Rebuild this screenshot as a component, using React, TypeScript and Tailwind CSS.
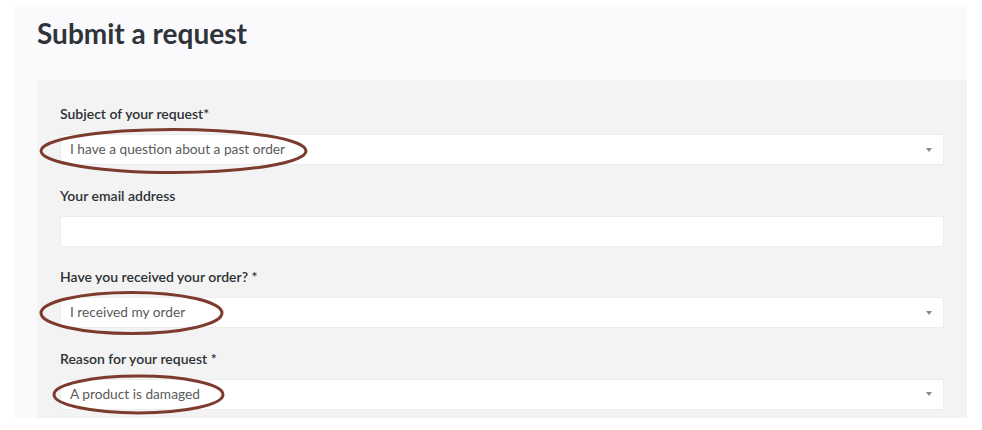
import React from "react";

const fields = [
  { label: "Subject of your request*", value: "I have a question about a past order", select: true },
  { label: "Your email address", value: "", select: false },
  { label: "Have you received your order? *", value: "I received my order", select: true },
  { label: "Reason for your request *", value: "A product is damaged", select: true },
];

function Caret() {
  return (
    <svg width="6" height="4" viewBox="0 0 6 4" className="shrink-0">
      <path d="M0 0 L6 0 L3 4 Z" fill="#8a8a8a" />
    </svg>
  );
}

export default function App() {
  return (
    <div className="relative h-[430px] w-[982px] bg-white pt-[7px] pl-[15px] pr-[15px] font-['Lato','Noto_Sans',sans-serif] overflow-hidden">
      <div className="bg-[#fafafc] pl-[22px]">
        <h1 className="h-[73px] pt-[8px] text-[28px] font-bold leading-[36px] text-[#2f343b]">
          Submit a request
        </h1>
        <div className="bg-[#f3f3f3] pl-[23px] pr-[23px] pt-[24px] pb-[8px]">
          {fields.map((f) => (
            <div key={f.label} className="mb-[20.6px] last:mb-0">
              <div className="mb-[10px] h-[20px] text-[14px] font-semibold leading-[20px] text-[#2c3136]">
                {f.label}
              </div>
              <div className="flex h-[31px] items-center justify-between rounded-[3px] border border-[#ececec] bg-white pl-[9px] pr-[11px] text-[13.7px] text-[#5a5a5a]">
                <span>{f.value}</span>
                {f.select && <Caret />}
              </div>
            </div>
          ))}
        </div>
      </div>

      <svg className="pointer-events-none absolute left-0 top-0" width="982" height="430">
        <g fill="none" stroke="#7c3b2c" strokeWidth="3">
          <ellipse cx="173.5" cy="151" rx="132.5" ry="21.5" />
          <ellipse cx="131.5" cy="313" rx="90.5" ry="20.5" />
          <ellipse cx="138.5" cy="394.5" rx="84.5" ry="18.5" />
        </g>
      </svg>
    </div>
  );
}
